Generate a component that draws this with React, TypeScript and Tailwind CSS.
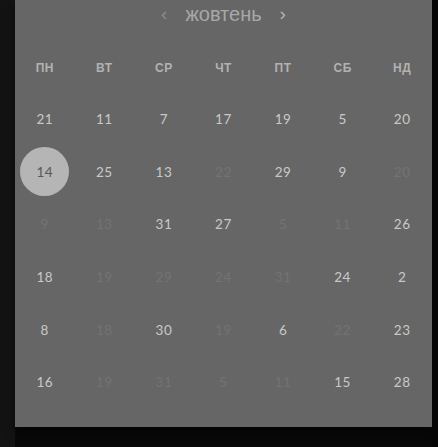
import React from 'react';

type Day = { n: number; faint?: boolean; selected?: boolean };

const weekdays = ['пн', 'вт', 'ср', 'чт', 'пт', 'сб', 'нд'];

const rows: Day[][] = [
  [{ n: 21 }, { n: 11 }, { n: 7 }, { n: 17 }, { n: 19 }, { n: 5 }, { n: 20 }],
  [{ n: 14, selected: true }, { n: 25 }, { n: 13 }, { n: 22, faint: true }, { n: 29 }, { n: 9 }, { n: 20, faint: true }],
  [{ n: 9, faint: true }, { n: 13, faint: true }, { n: 31 }, { n: 27 }, { n: 5, faint: true }, { n: 11, faint: true }, { n: 26 }],
  [{ n: 18 }, { n: 19, faint: true }, { n: 29, faint: true }, { n: 24, faint: true }, { n: 31, faint: true }, { n: 24 }, { n: 2 }],
  [{ n: 8 }, { n: 18, faint: true }, { n: 30 }, { n: 19, faint: true }, { n: 6 }, { n: 22, faint: true }, { n: 23 }],
  [{ n: 16 }, { n: 19, faint: true }, { n: 31, faint: true }, { n: 5, faint: true }, { n: 11, faint: true }, { n: 15 }, { n: 28 }],
];

const App: React.FC = () => {
  return (
    <div className="flex w-[438px] h-[447px] bg-[#080808] font-['Lato','Noto_Sans',sans-serif]">
      {/* left dark strip */}
      <div className="w-[15px] h-full bg-[#131313]" />

      <div className="w-[417px] flex flex-col">
        {/* calendar panel */}
        <div className="h-[427px] bg-[#666666] shadow-[0_4px_10px_rgba(0,0,0,0.6)]">
          <header className="h-[30px] flex items-center justify-center gap-[18px] font-['Liberation_Sans',sans-serif]">
            <span className="text-[19px] leading-none text-[#8c8c8c] pb-[3px]">‹</span>
            <span className="text-[20px] leading-none text-[#a8a8a8] pb-[2px]">жовтень</span>
            <span className="text-[19px] leading-none text-[#b4b4b4] pb-[3px]">›</span>
          </header>

          <div className="mt-[12px] grid grid-cols-7 h-[51px] items-center">
            {weekdays.map((w) => (
              <div key={w} className="text-center uppercase text-[12px] font-bold tracking-[0.04em] text-[#b2b2b2] font-['Liberation_Sans',sans-serif]">
                {w}
              </div>
            ))}
          </div>

          {rows.map((row, i) => (
            <div key={i} className="grid grid-cols-7 h-[52.6px] items-center">
              {row.map((d, j) => (
                <div key={j} className="flex justify-center">
                  {d.selected ? (
                    <span className="w-[49px] h-[49px] rounded-full bg-[#b5b5b5] flex items-center justify-center text-[13.5px] tracking-[0.04em] text-[#565656]">
                      {d.n}
                    </span>
                  ) : (
                    <span
                      className={`text-[13.5px] tracking-[0.04em] ${d.faint ? 'text-[#737373]' : 'text-[#c9c9c9]'}`}
                    >
                      {d.n}
                    </span>
                  )}
                </div>
              ))}
            </div>
          ))}
        </div>
      </div>

      {/* right strip */}
      <div className="w-[6px] h-full bg-[#050505]" />
    </div>
  );
};

export default App;
